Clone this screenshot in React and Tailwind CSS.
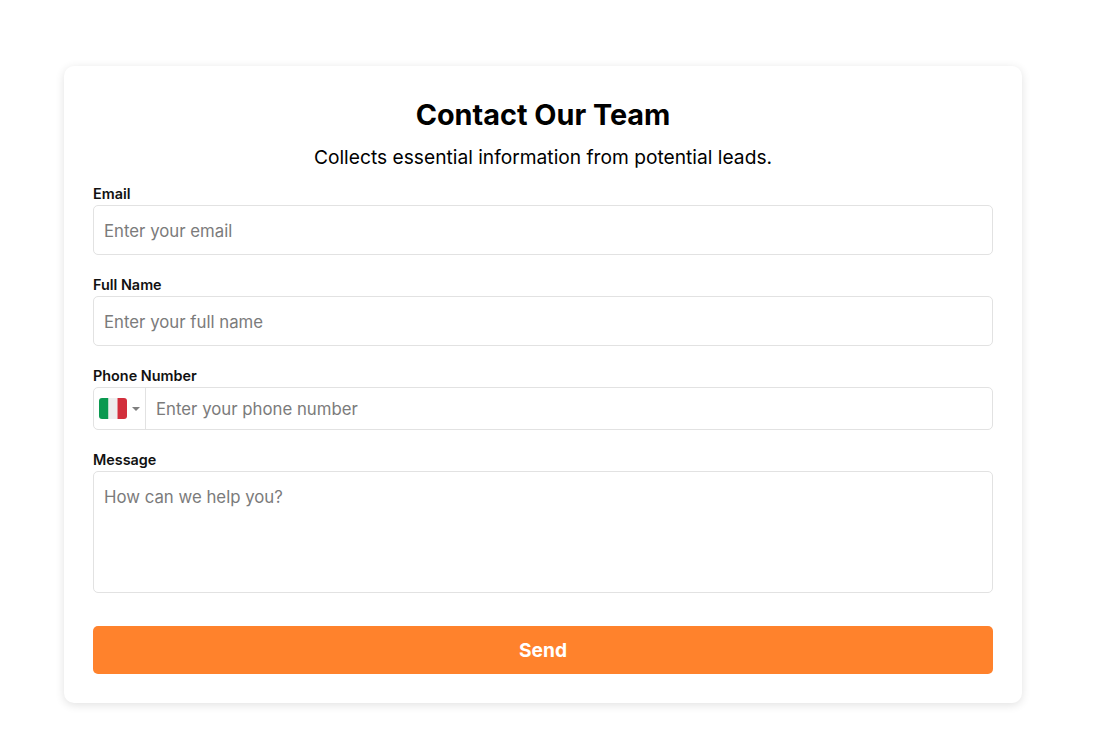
import React from "react";

function Field({ label, children, className = "" }) {
  return (
    <div className={className}>
      <label className="block text-[14.4px] leading-[17px] font-semibold text-[#111] mb-[3px]">{label}</label>
      {children}
    </div>
  );
}

const inputCls = "block w-full h-[50px] px-[10px] pt-[2px] text-[16.8px] bg-white border border-[#e2e2e2] rounded-[5px] outline-none placeholder:text-[#7b7b7b]";

export default function App() {
  return (
    <div className="min-h-[747px] bg-white pt-[66px] pl-[64px] font-['Inter',sans-serif]">
      <form className="w-[958px] h-[637px] bg-white rounded-[10px] shadow-[0_2px_10px_rgba(0,0,0,0.12)] px-[29px] pt-[30px]">
        <h1 className="text-[28.8px] leading-[38px] font-bold text-black text-center">Contact Our Team</h1>
        <p className="mt-[11px] text-[19.2px] leading-[24px] text-black text-center">Collects essential information from potential leads.</p>

        <Field label="Email" className="mt-[16px]">
          <input className={inputCls} placeholder="Enter your email" />
        </Field>
        <Field label="Full Name" className="mt-[21px]">
          <input className={inputCls} placeholder="Enter your full name" />
        </Field>
        <Field label="Phone Number" className="mt-[21px]">
          <div className="flex h-[43px] border border-[#e2e2e2] rounded-[5px]">
            <div className="flex items-center w-[52px] shrink-0 border-r border-[#e2e2e2] pl-[5px]">
              <svg width="28" height="21" viewBox="0 0 28 21">
                <defs>
                  <clipPath id="flag"><rect width="28" height="21" rx="3" /></clipPath>
                </defs>
                <g clipPath="url(#flag)">
                  <rect width="9.5" height="21" fill="#0a9950" />
                  <rect x="9.5" width="9" height="21" fill="#eeeeee" />
                  <rect x="18.5" width="9.5" height="21" fill="#d22f3c" />
                </g>
              </svg>
              <svg width="8" height="4" viewBox="0 0 8 4" className="ml-[5px]">
                <path d="M0 0h8L4 4z" fill="#7f7f7f" />
              </svg>
            </div>
            <input className="flex-1 min-w-0 px-[10px] pt-[2px] text-[16.8px] bg-transparent outline-none placeholder:text-[#7b7b7b]" placeholder="Enter your phone number" />
          </div>
        </Field>
        <Field label="Message" className="mt-[21px]">
          <textarea className="block w-full h-[122px] px-[10px] pt-[13px] text-[16.8px] leading-[24px] bg-white border border-[#e2e2e2] rounded-[5px] outline-none resize-none placeholder:text-[#7b7b7b]" placeholder="How can we help you?" />
        </Field>
        <button type="button" className="mt-[33px] block w-full h-[48px] bg-[#ff822c] rounded-[5px] text-white text-[19.2px] font-bold">Send</button>
      </form>
    </div>
  );
}
